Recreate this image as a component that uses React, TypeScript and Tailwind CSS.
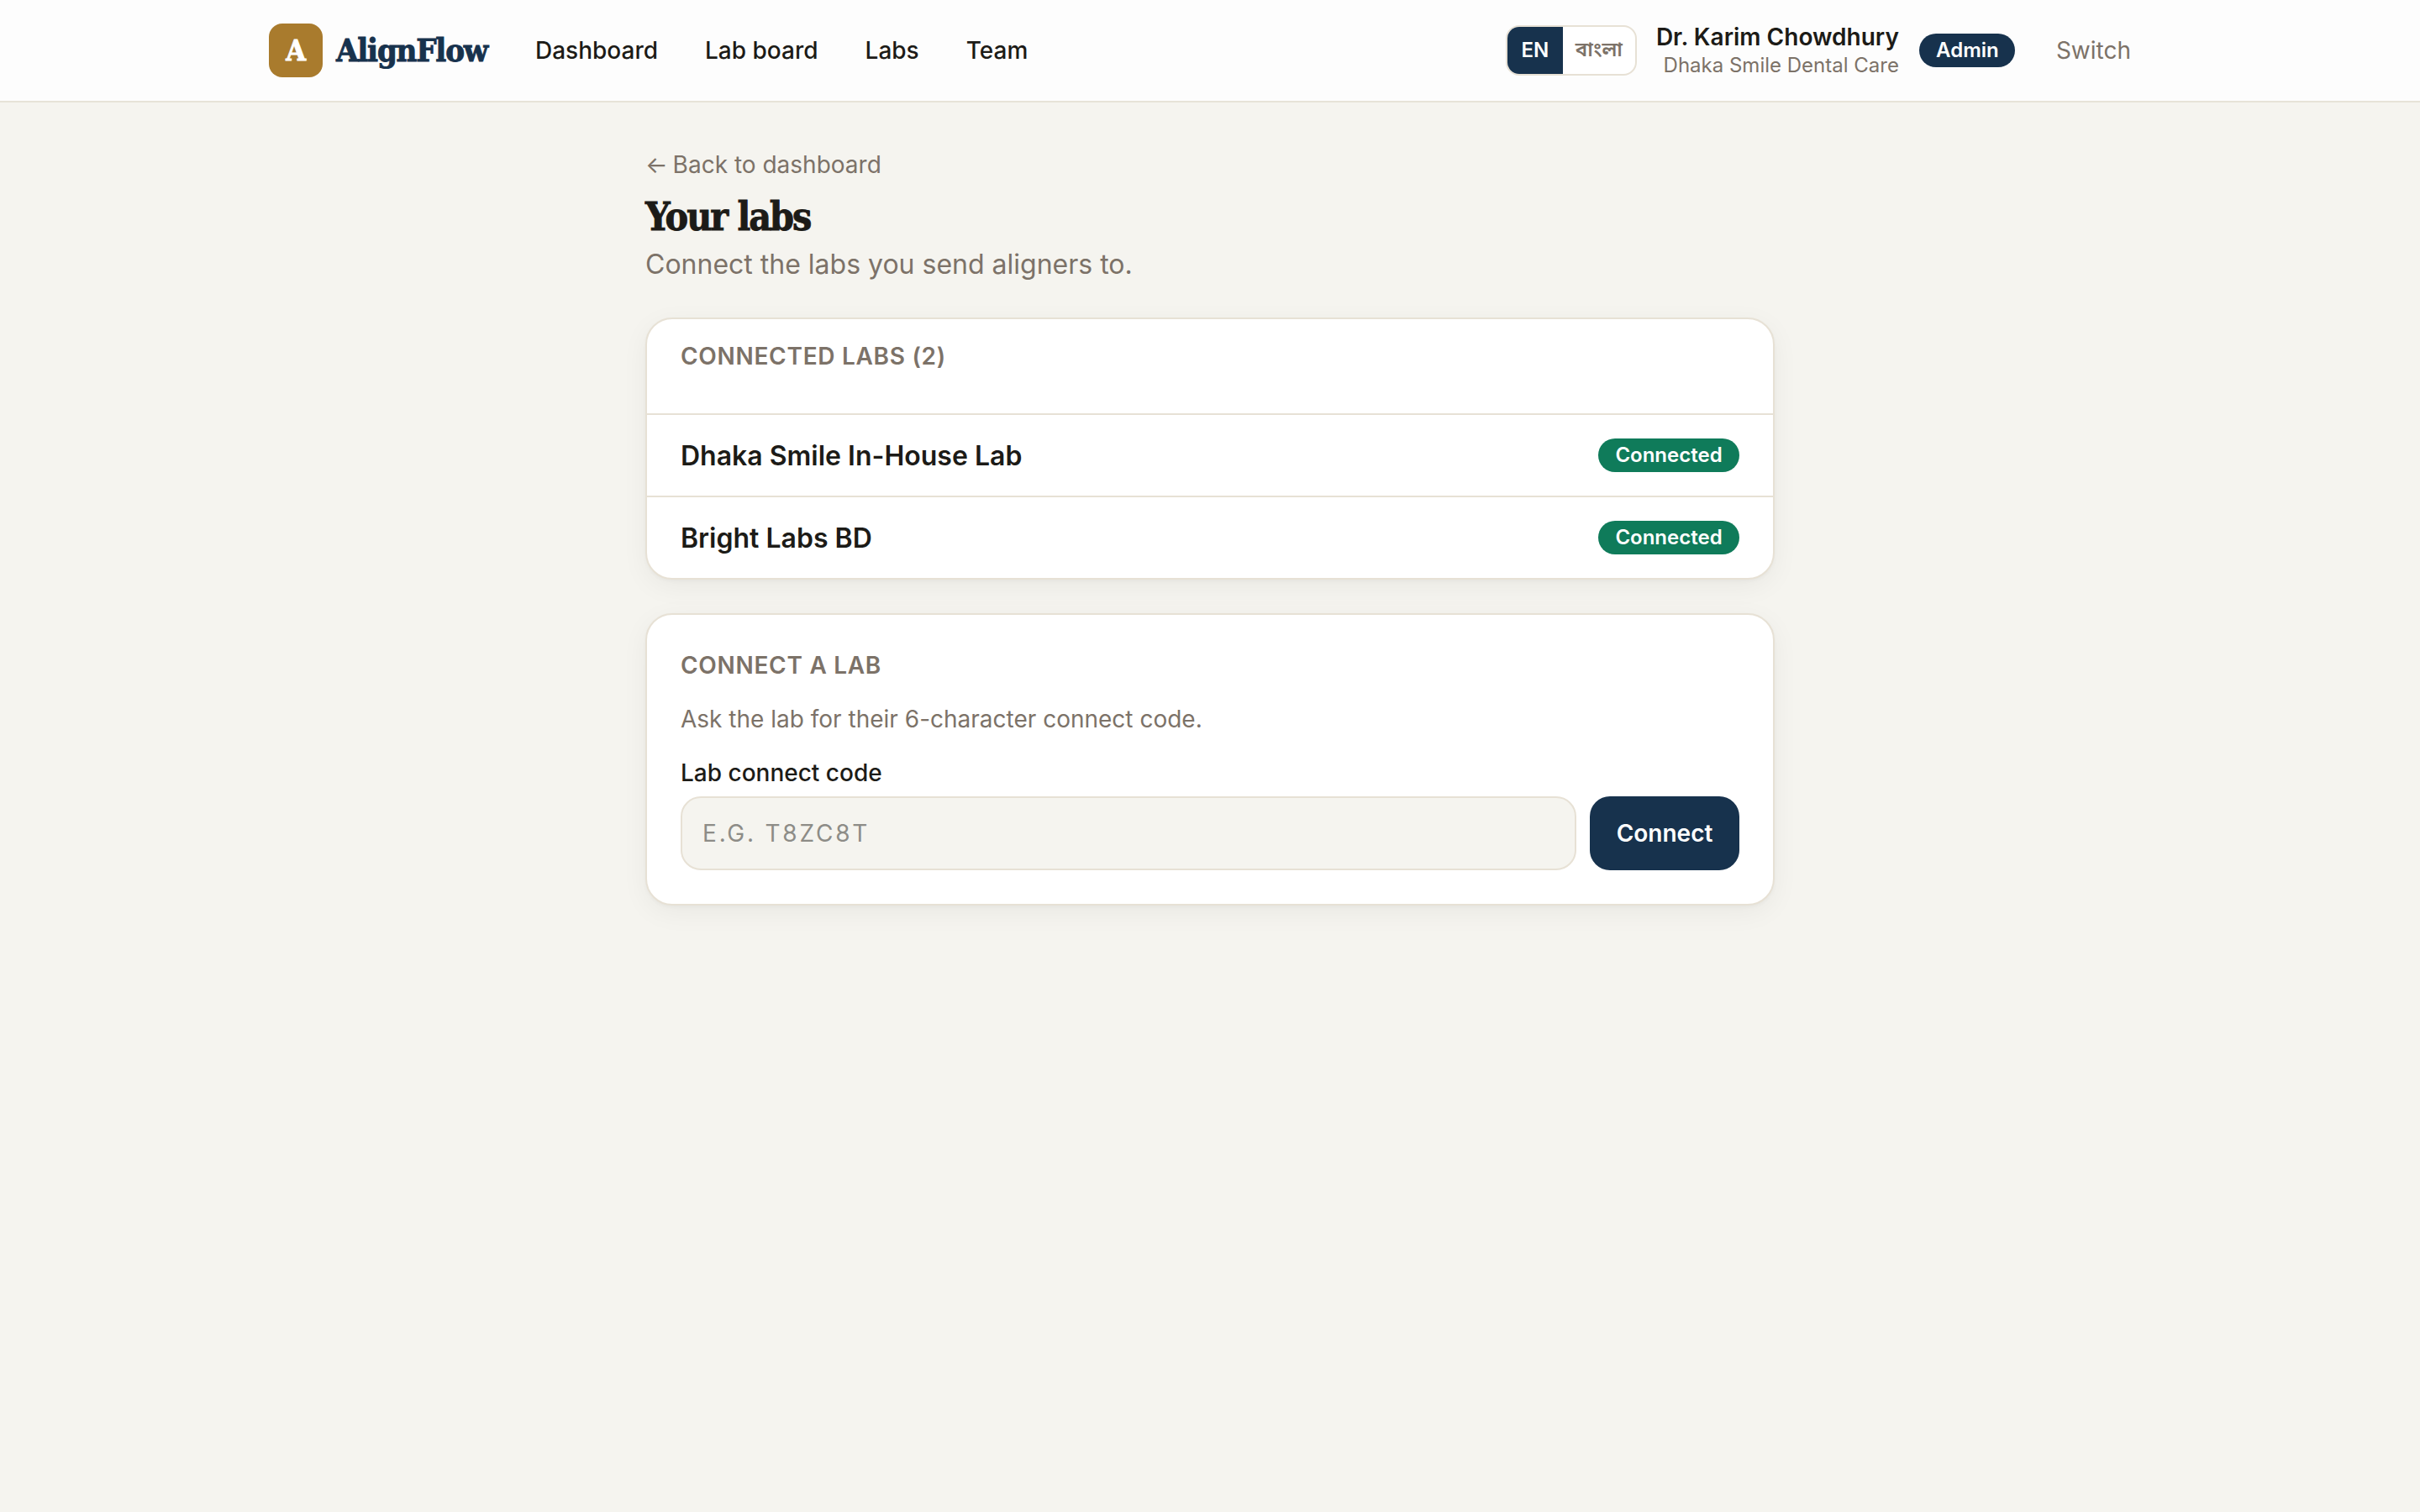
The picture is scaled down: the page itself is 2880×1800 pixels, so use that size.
const navItems = ["Dashboard", "Lab board", "Labs", "Team"];
const labs = ["Dhaka Smile In-House Lab", "Bright Labs BD"];

const serif = "font-['DejaVu_Serif_Condensed','DejaVu_Serif',serif] [font-stretch:75%] font-bold [-webkit-text-stroke:0.9px_currentColor]";
const card =
  "rounded-[32px] border-2 border-[#e7e1d5] bg-white shadow-[0_2px_4px_rgba(28,27,23,0.03),0_8px_32px_rgba(28,27,23,0.05)]";

function Header() {
  return (
    <header className="h-[122px] border-b-2 border-[#e7e3d8] bg-[#fdfdfd]">
      <div className="mx-auto flex h-full w-[2240px] items-center">
        <div className="flex items-center gap-4">
          <span className={`${serif} flex size-16 items-center justify-center rounded-2xl bg-[#a97b2d] text-[34px] text-white`}>
            A
          </span>
          <span className={`${serif} w-[186px] pb-0.5 whitespace-nowrap text-[38px] tracking-[-1.2px] text-[#17324d]`}>AlignFlow</span>
        </div>
        <nav className="ml-[27px] flex gap-2 text-[28px] font-medium">
          {navItems.map((item) => (
            <a key={item} className="px-6">
              {item}
            </a>
          ))}
        </nav>
        <div className="ml-auto flex items-center">
          <div className="flex h-[60px] w-[156px] overflow-hidden rounded-2xl border-2 border-[#e7e1d5] bg-white text-2xl font-semibold">
            <span className="flex w-[66px] items-center justify-center bg-[#17324d] text-white">EN</span>
            <span className="flex flex-1 items-center justify-center pb-0.5 text-[#7c7268]">বাংলা</span>
          </div>
          <div className="ml-[23px] text-right">
            <div className="text-[28px] leading-[35px] font-semibold">Dr. Karim Chowdhury</div>
            <div className="text-2xl leading-8 text-[#7c7268]">Dhaka Smile Dental Care</div>
          </div>
          <span className="ml-6 flex h-10 w-[114px] items-center justify-center rounded-full bg-[#17324d] pl-px text-2xl font-semibold text-white">
            Admin
          </span>
          <button className="ml-[25px] px-6 text-[28px] text-[#7c7268]">Switch</button>
        </div>
      </div>
    </header>
  );
}

function ConnectedLabs() {
  return (
    <section className={`${card} mt-[39px]`}>
      <h2 className="h-28 px-10 pt-6 text-[28px] leading-10 font-semibold tracking-[0.7px] text-[#7c7268]">
        CONNECTED LABS (2)
      </h2>
      {labs.map((lab) => (
        <div key={lab} className="flex h-[98px] items-center justify-between border-t-2 border-[#e7e1d5] px-10">
          <span className="pt-0.5 text-[32px] font-semibold">{lab}</span>
          <span className="flex h-10 w-[168px] items-center justify-center rounded-full bg-[#0f7b5a] text-2xl font-semibold text-white">
            Connected
          </span>
        </div>
      ))}
    </section>
  );
}

function ConnectForm() {
  return (
    <section className={`${card} mt-10 px-10 pt-10 pb-10`}>
      <h2 className="text-[28px] leading-10 font-semibold tracking-[0.7px] text-[#7c7268]">CONNECT A LAB</h2>
      <p className="mt-6 text-[28px] leading-10 text-[#7c7268]">Ask the lab for their 6-character connect code.</p>
      <label className="mt-6 block text-[28px] leading-10 font-medium">Lab connect code</label>
      <div className="mt-2 flex gap-4">
        <input
          className="h-22 min-w-0 flex-1 rounded-3xl border-2 border-[#e7e1d5] bg-[#f5f4ef] px-6 text-[28px] tracking-[2.8px] placeholder:text-[#8d8c87]"
          placeholder="E.G. T8ZC8T"
        />
        <button className="h-22 w-[178px] rounded-3xl bg-[#17324d] text-[28px] font-semibold text-white">Connect</button>
      </div>
    </section>
  );
}

export default function App() {
  return (
    <div className="min-h-screen bg-[#f5f4ef] font-['Inter','Noto_Sans_Bengali',sans-serif] text-[#1c1b17]">
      <Header />
      <main className="mx-auto w-[1344px] pt-[54px]">
        <a className="block text-[28px] leading-10 text-[#7c7268]">
          <span className="-mr-0.5">←</span> Back to dashboard
        </a>
        <h1 className={`${serif} mt-2 text-[46px] leading-[68px] tracking-[-2px]`}>Your labs</h1>
        <p className="-mt-px text-[32px] leading-12 text-[#7c7268]">Connect the labs you send aligners to.</p>
        <ConnectedLabs />
        <ConnectForm />
      </main>
    </div>
  );
}
